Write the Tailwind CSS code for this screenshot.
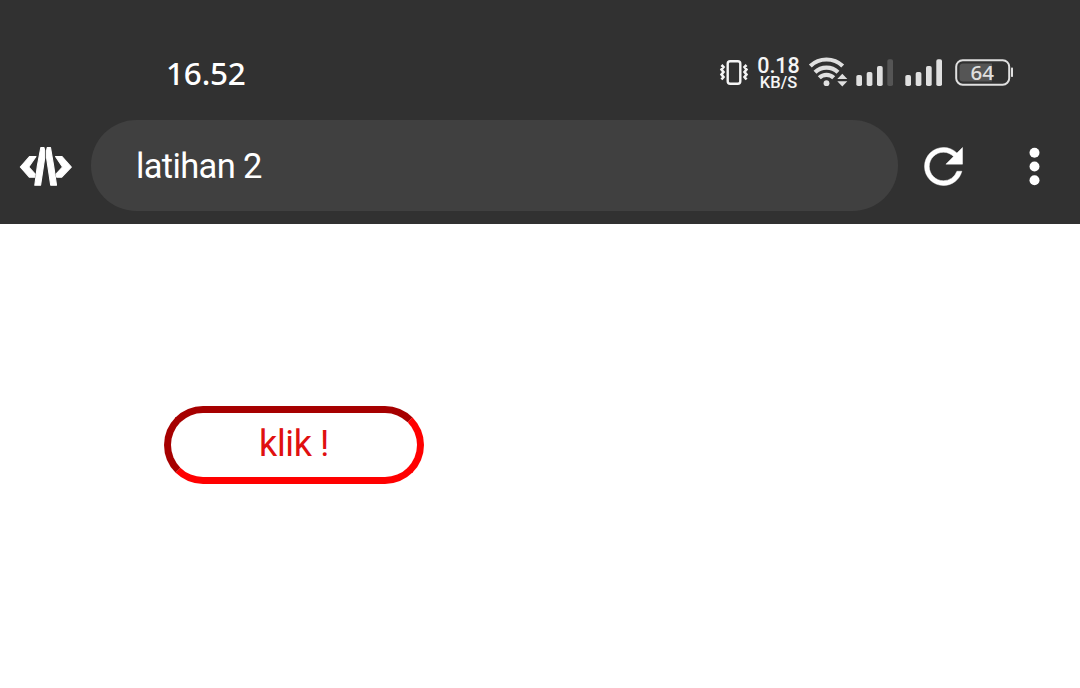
<!DOCTYPE html>
<html lang="id">
<head>
<meta charset="utf-8">
<title>latihan 2</title>
<script src="https://cdn.jsdelivr.net/npm/@tailwindcss/browser@4"></script>
</head>
<body class="h-[688px] w-[1080px] overflow-hidden bg-white font-['Roboto',sans-serif]">
<header class="h-[224px] bg-[#313131] text-white">
  <div class="flex h-[120px] items-start pl-[166px] pr-[66px] pt-[53px]">
    <div class="h-10 text-[31.500px] leading-[39px] font-medium tracking-[-0.2px] font-['Noto_Sans',sans-serif]">16.52</div>
    <div class="ml-auto flex h-10 items-center">
      <svg class="h-10 w-[32px]" viewBox="718 53 32 40" fill="none" stroke="#f5f5f5">
        <rect x="727.7" y="61.200" width="12.600" height="22.500" rx="2.500" stroke-width="2.400"/>
        <path d="M721.500 65l2 2-2 2.500 2 2.500-2 2.500 2 2.500-2 2.500M746.500 65l-2 2 2 2.500-2 2.500 2 2.500-2 2.500 2 2.500" stroke-width="2.600"/>
      </svg>
      <div class="flex h-10 w-[57px] flex-col items-center pt-[4px] text-[#f5f5f5] font-['Roboto',sans-serif]">
        <span class="whitespace-nowrap text-[21.500px] leading-[17px] font-medium">0.18</span>
        <span class="whitespace-nowrap text-[16.500px] leading-[17px] font-medium">KB/S</span>
      </div>
      <svg class="-ml-px h-10 w-[208px]" viewBox="806 53 208 40" fill="none">
        <g stroke="#e0e0e0" stroke-width="4.200">
          <path d="M810.300 66A23.500 23.500 0 0 1 842.700 66"/>
          <path d="M815 72.200A16.500 16.500 0 0 1 838 72.200"/>
          <path d="M819.300 77.800A10.200 10.200 0 0 1 833.700 77.800"/>
        </g>
        <circle cx="826.500" cy="83.200" r="2.900" fill="#e0e0e0"/>
        <path d="M837.300 78.900l5-5.200 5 5.200zM837.300 81.300h10l-5 5.200z" fill="#e0e0e0"/>
        <g fill="#e0e0e0">
          <rect x="856.300" y="75" width="5.700" height="11" rx="1.800"/>
          <rect x="866.700" y="72" width="5.700" height="14" rx="1.800"/>
          <rect x="877" y="66" width="5.700" height="20" rx="1.800"/>
          <rect x="887.300" y="59.300" width="5.700" height="26.700" rx="1.800" fill="#555"/>
          <rect x="905.300" y="75" width="5.700" height="11" rx="1.800"/>
          <rect x="915.700" y="72" width="5.700" height="14" rx="1.800"/>
          <rect x="926" y="66" width="5.700" height="20" rx="1.800"/>
          <rect x="936.300" y="59.300" width="5.700" height="26.700" rx="1.800"/>
          <rect x="1011" y="67.500" width="2" height="9.500" rx=".7"/>
        </g>
        <path d="M963 63.500H992V81.500H963a3.500 3.500 0 0 1-3.500-3.500V67a3.500 3.500 0 0 1 3.500-3.500z" fill="#555"/>
        <rect x="956.200" y="60.200" width="53" height="24.500" rx="6.500" stroke="#e0e0e0" stroke-width="2"/>
        <text x="982.300" y="80" text-anchor="middle" class="fill-[#e0e0e0] font-['Noto_Sans',sans-serif] text-[20.500px] font-medium">64</text>
      </svg>
    </div>
  </div>
  <div class="flex h-[91px] items-center">
    <svg class="mx-[18px] h-[44px] w-[55px]" viewBox="18 144 55 44" fill="#fff" stroke="#fff" stroke-width="1.100" stroke-linejoin="round">
      <path d="M29.500 156.500H36L28.800 167 35.200 174 34.500 177.300H29.500L20.300 167z"/>
      <path d="M62 156.500H55.500L62.500 167 56 174 56.800 177.300H61.500L71.300 167z"/>
      <path d="M40.800 147.500H44L44.700 150.500V158L40.600 185.200H34.800L37.300 166z"/>
      <path d="M47.200 147.500H50.500L53.700 166 56.500 185.200H50.700L46.600 158V150.500z"/>
    </svg>
    <div class="flex h-[91px] w-[807px] items-center rounded-full bg-[#404040] pl-[45px] pt-[2px] text-[34.500px] leading-none tracking-[-0.65px]">latihan 2</div>
    <svg class="mt-[2px] ml-[17px] h-[57px] w-[57px]" viewBox="0 0 24 24" fill="#fff" stroke="#fff" stroke-width=".2"><path d="M17.650 6.350A7.958 7.958 0 0 0 12 4c-4.420 0-7.990 3.580-7.990 8s3.570 8 7.990 8c3.730 0 6.840-2.550 7.730-6h-2.080A5.990 5.990 0 0 1 12 18c-3.310 0-6-2.690-6-6s2.690-6 6-6c1.660 0 3.140.69 4.220 1.780L13 11h7V4z"/></svg>
    <svg class="mt-[2px] ml-[34px] h-[57px] w-[57px]" viewBox="0 0 24 24" fill="#fff"><circle cx="12" cy="6.200" r="2.100"/><circle cx="12" cy="12" r="2.100"/><circle cx="12" cy="17.800" r="2.100"/></svg>
  </div>
</header>
<main class="pl-[164px] pt-[182px]">
  <button class="flex h-[78px] w-[260px] items-center justify-center rounded-full border-[7px] border-t-[#a60000] border-l-[#a60000] border-r-[#ff0000] border-b-[#ff0000] pb-[2px] text-[36px] leading-none tracking-[-0.4px] text-[#e01010]">klik !</button>
</main>
</body>
</html>
